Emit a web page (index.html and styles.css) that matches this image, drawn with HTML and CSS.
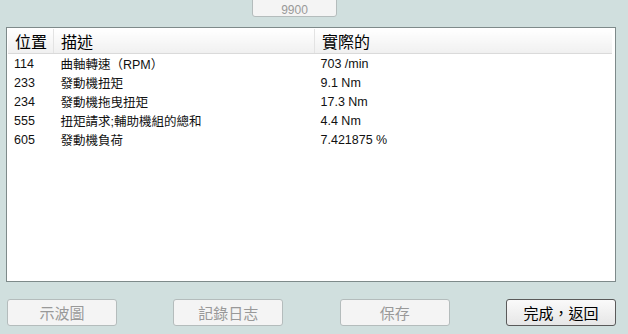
FILE: index.html
```html
<!DOCTYPE html>
<html lang="zh-Hant">
<head>
  <meta charset="UTF-8" />
  <title>實際值</title>
  <link rel="stylesheet" href="styles.css">
</head>
<body>
  <div class="top">
    <button class="btn disabled top-btn">9900</button>
  </div>

  <div class="panel">
    <table class="values">
      <thead>
        <tr>
          <th class="col-pos">位置</th>
          <th class="col-desc">描述</th>
          <th class="col-val">實際的</th>
        </tr>
      </thead>
      <tbody>
        <tr><td>114</td><td>曲軸轉速（RPM）</td><td>703 /min</td></tr>
        <tr><td>233</td><td>發動機扭矩</td><td>9.1 Nm</td></tr>
        <tr><td>234</td><td>發動機拖曳扭矩</td><td>17.3 Nm</td></tr>
        <tr><td>555</td><td>扭矩請求;輔助機組的總和</td><td>4.4 Nm</td></tr>
        <tr><td>605</td><td>發動機負荷</td><td>7.421875 %</td></tr>
      </tbody>
    </table>
  </div>

  <div class="actions">
    <button class="btn disabled">示波圖</button>
    <button class="btn disabled">記錄日志</button>
    <button class="btn disabled">保存</button>
    <button class="btn">完成，返回</button>
  </div>
</body>
</html>
```

FILE: styles.css
```css
body {
  margin: 0;
  width: 628px;
  height: 334px;
  overflow: hidden;
  background-color: #d0dfde;
  font-family: "Liberation Sans", "Noto Sans CJK TC", sans-serif;
}

.top {
  height: 14px;
  padding-left: 252px;
}

.btn {
  width: 110px;
  height: 27px;
  padding: 0;
  border: 1px solid #5a5a5a;
  border-radius: 3px;
  background: linear-gradient(#fafafa, #e6e6e6);
  color: #000;
  font-family: "Noto Sans CJK TC", sans-serif;
  font-size: 15px;
}

.btn.disabled {
  border-color: #b4bcbc;
  background: #f4f4f4;
  color: #999;
}

.top-btn {
  width: 85px;
  height: 25px;
  margin-top: -11px;
  font-family: "Liberation Sans", sans-serif;
  font-size: 12px;
  padding-top: 10px;
}

.panel {
  margin: 13px 12px 0 6px;
  height: 252px;
  border: 1px solid #7e8a8a;
  background-color: #fff;
  padding: 1px 3px 0 1px;
}

.values {
  width: 100%;
  border-collapse: collapse;
  font-size: 12.5px;
}

.values th {
  height: 20px;
  padding: 0 0 0 7px;
  text-align: left;
  font-family: "Noto Sans CJK TC", sans-serif;
  font-size: 16px;
  font-weight: normal;
  color: #000;
  background: linear-gradient(#fff, #f0f0f0);
  border-bottom: 1px solid #dadada;
  border-right: 1px solid #e3e3e3;
}

.values th.col-val {
  border-right: none;
}

.col-pos {
  width: 38px;
}

.col-desc {
  width: 253px;
}

.values td {
  height: 19px;
  padding: 0 0 0 6px;
  color: #111;
  white-space: nowrap;
}

.values td:nth-child(2) {
  padding-left: 7px;
}

.values td:nth-child(3) {
  padding-left: 6px;
}

.actions {
  display: flex;
  justify-content: space-between;
  padding: 17px 12px 0 7px;
}
```
